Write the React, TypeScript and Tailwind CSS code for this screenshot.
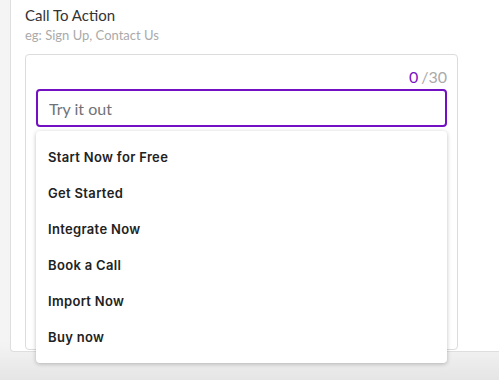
import { useState } from "react"

const options = [
    "Start Now for Free",
    "Get Started",
    "Integrate Now",
    "Book a Call",
    "Import Now",
    "Buy now",
]

function App() {
    const [value, setValue] = useState("")

    return (
        <div className="relative h-[380px] w-[499px] overflow-hidden bg-gradient-to-b from-[#f4f4f4] from-90% to-[#e5e5e5] pl-[10px] font-['Lato',sans-serif]">
            {/* Card */}
            <div className="h-[352px] w-[520px] rounded-bl-[4px] border-b border-l border-[#dedede] bg-white pl-[14px] pt-[5px]">
                <div className="text-[15px] leading-[20px] text-[#333]">Call To Action</div>
                <div className="text-[13px] leading-[20px] text-[#aaa]">eg: Sign Up, Contact Us</div>

                <div className="mt-[9px] h-[296px] w-[433px] rounded-[4px] border border-[#dcdcdc] px-[10px] pt-[10px]">
                    <div className="flex h-[24px] items-center justify-end text-[16px]">
                        <span className="text-[#7a12c4]">{value.length}</span>
                        <span className="ml-[3px] text-[#aaa]">/30</span>
                    </div>
                    <input
                        autoFocus
                        value={value}
                        maxLength={30}
                        onChange={(e) => setValue(e.target.value)}
                        placeholder="Try it out"
                        className="h-[38px] w-full rounded-[4px] border-2 border-[#7410c4] px-[11px] text-[16px] text-[#333] caret-[#333] outline-none placeholder:text-[#6f7378]"
                    />
                </div>
            </div>

            {/* Dropdown */}
            <div className="absolute left-[36px] top-[131px] w-[411px] rounded-[4px] bg-white pb-[7px] pt-[9px] shadow-[0_1px_4px_rgba(0,0,0,0.25)]">
                {options.map((item, index) => (
                    <div
                        key={index}
                        onClick={() => setValue(item)}
                        className="flex h-[36px] cursor-pointer items-center px-[12px] font-['Inter',sans-serif] text-[13px] font-semibold tracking-[0.025em] text-[#222] hover:bg-gray-50"
                    >
                        {item}
                    </div>
                ))}
            </div>
        </div>
    )
}

export default App
